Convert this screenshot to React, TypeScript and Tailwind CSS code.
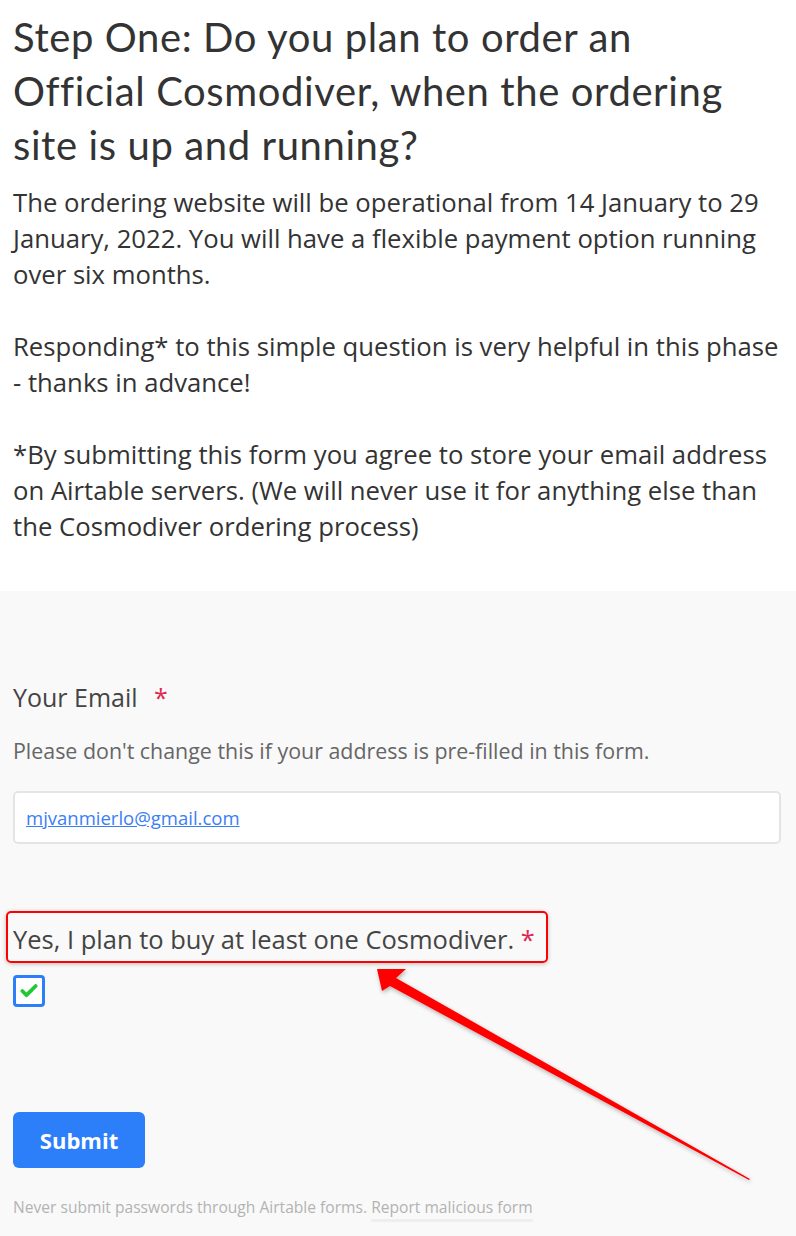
import { Check } from "lucide-react";

const body = { fontFamily: '"Open Sans", "Noto Sans", sans-serif' };

export default function App() {
  return (
    <div className="w-[796px] min-h-[1236px] bg-[#f9f9f9] overflow-hidden">
      {/* intro */}
      <div className="bg-white px-[13px] pt-[10px] pb-[46px]">
        <h1
          className="max-w-[748px] text-[40px] leading-[54px] tracking-[0.6px] text-[#333333]"
          style={{ fontFamily: 'Lato, "Noto Sans", sans-serif' }}
        >
          Step One: Do you plan to order an Official Cosmodiver, when the ordering site is up and running?
        </h1>
        <div className="mt-[13px] text-[25.7px] leading-[36px] text-[#333333]" style={body}>
          <p>
            The ordering website will be operational from 14 January to 29 January, 2022. You will have a flexible
            payment option running over six months.
          </p>
          <p className="mt-[36px]">Responding* to this simple question is very helpful in this phase - thanks in advance!</p>
          <p className="mt-[36px]">
            *By submitting this form you agree to store your email address on Airtable servers. (We will never use it
            for anything else than the Cosmodiver ordering process)
          </p>
        </div>
      </div>

      {/* form */}
      <div className="relative px-[13px] pt-[90px] pb-[10px]" style={body}>
        <div className="text-[25px] leading-[32px] text-[#444444]">
          Your Email <span className="ml-[10px] text-[#e0284e]">*</span>
        </div>
        <div className="mt-[24px] text-[21.4px] leading-[28px] text-[#666666]">
          Please don't change this if your address is pre-filled in this form.
        </div>
        <div className="mt-[26px] w-[768px] h-[53px] bg-white border-2 border-[#e4e4e4] rounded-[5px] flex items-center px-[11px]">
          <a href="#" className="text-[18.5px] text-[#3a7ef5] underline">
            mjvanmierlo@gmail.com
          </a>
        </div>

        <div className="mt-[79px] relative inline-block">
          <span className="absolute left-[-7px] right-[-13px] top-[-12px] bottom-[-8px] border-2 border-[#ff0000] rounded-[5px] shadow-[0_1px_4px_rgba(0,0,0,0.25)]" />
          <div className="text-[25.5px] leading-[32px] text-[#444444]">
            Yes, I plan to buy at least one Cosmodiver. <span className="text-[#e0284e]">*</span>
          </div>
        </div>
        <div className="mt-[20px] w-[32px] h-[32px] border-[3px] border-[#2d7ff9] rounded-[4px] bg-white flex items-center justify-center">
          <Check className="w-[20px] h-[20px] text-[#20c933]" strokeWidth={4.5} />
        </div>

        <button className="mt-[105px] block w-[132px] h-[56px] bg-[#2d7ff9] rounded-[6px] text-white text-[22px] font-bold">
          Submit
        </button>

        <div className="mt-[29px] text-[15.6px] leading-[20px] text-[#b3b3b3]">
          Never submit passwords through Airtable forms.{" "}
          <span className="inline-block border-b-[3px] border-[#eeeeee] pb-[2px]">Report malicious form</span>
        </div>

        {/* annotation arrow */}
        <svg className="absolute left-0 top-0 pointer-events-none" width="796" height="646" viewBox="0 590 796 646">
          <defs>
            <filter id="sh" x="-10%" y="-10%" width="120%" height="120%">
              <feDropShadow dx="1" dy="2" stdDeviation="2" floodColor="#000" floodOpacity="0.3" />
            </filter>
          </defs>
          <polygon
            points="377,968 406,968 396,977 750,1178 749,1179 390,985 382,990"
            fill="#ff0000"
            filter="url(#sh)"
          />
        </svg>
      </div>
    </div>
  );
}
